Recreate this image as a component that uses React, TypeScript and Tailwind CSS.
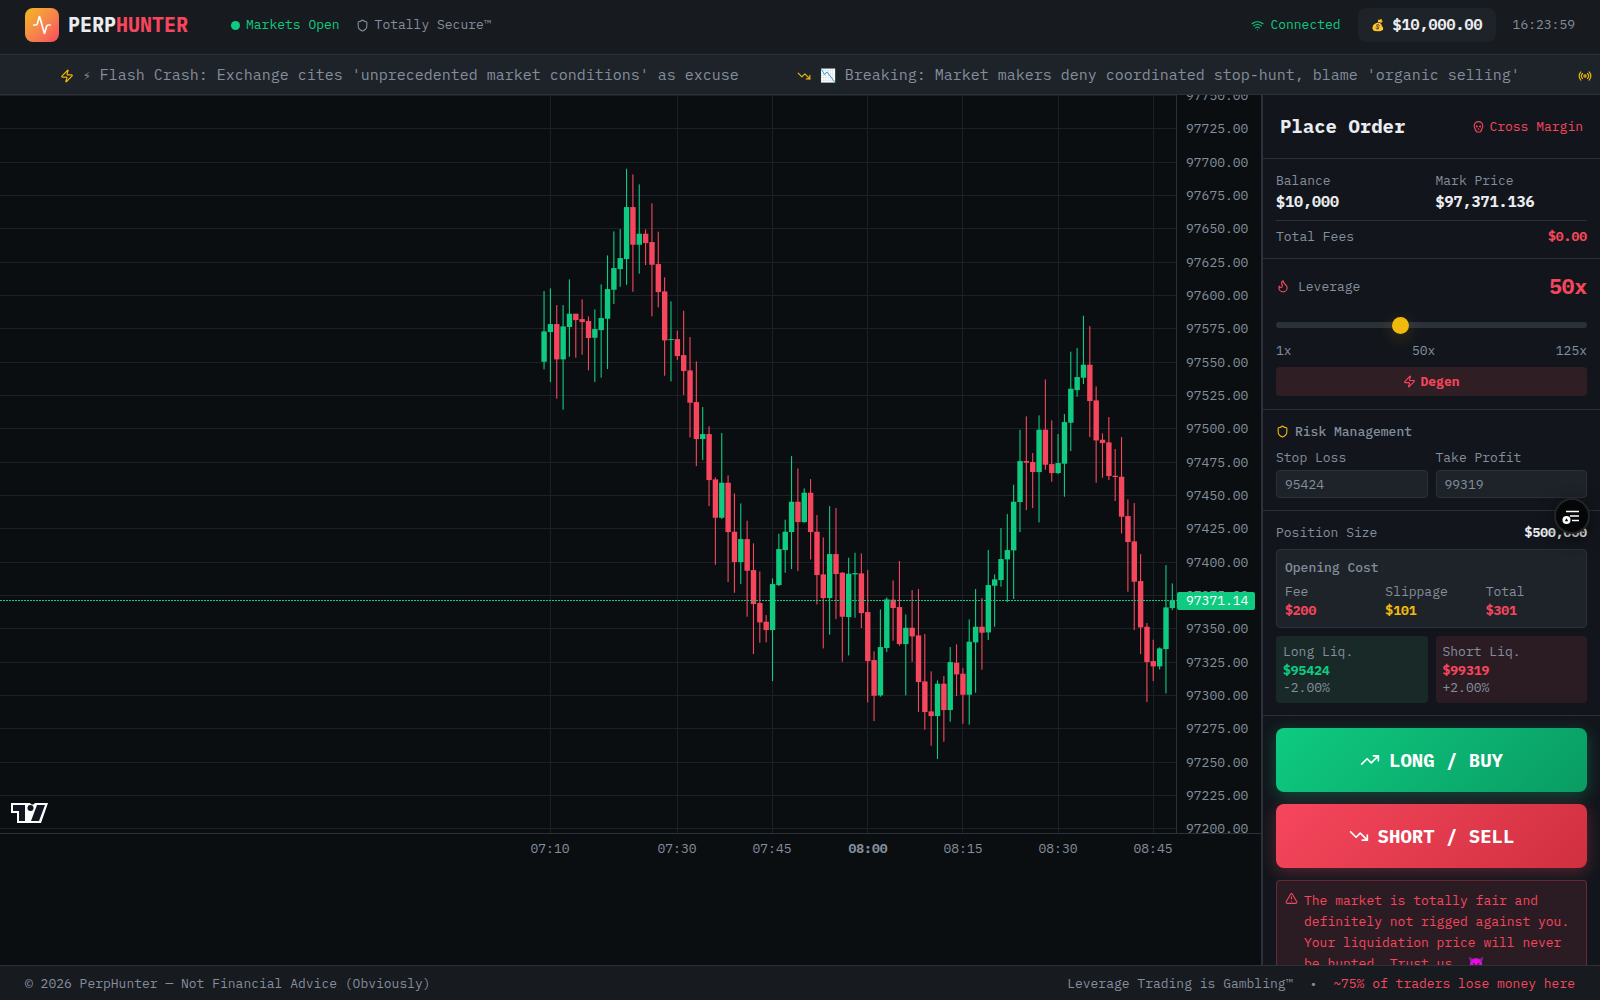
import React, { useState } from 'react';
import {
  Activity,
  Flame,
  Radio,
  Shield,
  Skull,
  TrendingDown,
  TrendingUp,
  TriangleAlert,
  Wifi,
  Zap,
} from 'lucide-react';

// [high, open, close, low] in $0.25 ticks below 97750
const CANDLES = [
  [587, 799, 708, 822], [579, 710, 686, 860], [629, 686, 792, 910], [629, 792, 693, 943],
  [552, 695, 655, 784], [655, 655, 674, 787], [612, 671, 680, 778], [663, 677, 728, 825],
  [642, 727, 701, 860], [567, 704, 668, 847], [480, 670, 581, 821], [408, 583, 518, 626],
  [401, 521, 488, 574], [220, 491, 335, 568], [237, 335, 448, 589], [267, 448, 415, 535],
  [402, 415, 443, 509], [324, 440, 508, 663], [409, 506, 590, 636], [546, 588, 735, 841],
  [618, 734, 731, 858], [706, 731, 782, 794], [646, 779, 827, 899], [725, 825, 922, 1026],
  [798, 920, 1031, 1112], [935, 1031, 1016, 1094], [993, 1016, 1154, 1232], [1146, 1152, 1267, 1408],
  [1013, 1267, 1162, 1271], [1140, 1162, 1310, 1460], [1194, 1309, 1400, 1492], [1224, 1400, 1331, 1466],
  [1276, 1331, 1426, 1564], [1344, 1424, 1526, 1676], [1428, 1523, 1581, 1642], [1559, 1579, 1604, 1641],
  [1449, 1604, 1466, 1757], [1315, 1469, 1361, 1472], [1273, 1364, 1309, 1432], [1082, 1310, 1219, 1421],
  [1119, 1219, 1280, 1427], [1179, 1280, 1192, 1282], [1151, 1192, 1310, 1392], [1259, 1309, 1439, 1527],
  [1326, 1437, 1508, 1659], [1232, 1508, 1376, 1618], [1238, 1376, 1436, 1571], [1430, 1432, 1564, 1699],
  [1387, 1565, 1435, 1680], [1372, 1437, 1433, 1567], [1374, 1434, 1553, 1598], [1424, 1550, 1697, 1821],
  [1668, 1694, 1801, 1877], [1542, 1800, 1655, 1804], [1506, 1658, 1512, 1670], [1455, 1513, 1538, 1636],
  [1397, 1535, 1646, 1651], [1557, 1646, 1597, 1800], [1484, 1597, 1623, 1699], [1481, 1620, 1760, 1850],
  [1616, 1758, 1850, 1903], [1728, 1848, 1862, 1951], [1755, 1862, 1765, 1991], [1742, 1765, 1844, 1939],
  [1655, 1844, 1700, 1879], [1647, 1702, 1737, 1802], [1718, 1735, 1798, 1885], [1572, 1798, 1639, 1888],
  [1481, 1641, 1594, 1792], [1508, 1594, 1612, 1723], [1364, 1611, 1469, 1634], [1437, 1471, 1452, 1594],
  [1298, 1454, 1391, 1474], [1256, 1392, 1364, 1520], [1168, 1365, 1219, 1511], [1003, 1220, 1097, 1310],
  [963, 1097, 1102, 1244], [1073, 1100, 1130, 1238], [960, 1130, 1003, 1281], [852, 1003, 1108, 1123],
  [975, 1106, 1133, 1159], [1016, 1133, 1103, 1136], [956, 1105, 980, 1204], [769, 982, 880, 1067],
  [758, 884, 845, 904], [661, 847, 808, 866], [692, 808, 917, 1025], [873, 915, 1035, 1162],
  [1014, 1033, 1043, 1147], [965, 1041, 1142, 1154], [1061, 1141, 1145, 1217], [1025, 1144, 1264, 1314],
  [1212, 1262, 1340, 1489], [1223, 1338, 1459, 1604], [1376, 1457, 1596, 1676], [1583, 1594, 1700, 1820],
  [1633, 1697, 1713, 1757], [1656, 1713, 1659, 1722], [1409, 1661, 1536, 1794], [1464, 1538, 1516, 1544],
];

const TIMES = [
  { label: '07:10', index: 1 },
  { label: '07:30', index: 21 },
  { label: '07:45', index: 36 },
  { label: '08:00', index: 51, major: true },
  { label: '08:15', index: 66 },
  { label: '08:30', index: 81 },
  { label: '08:45', index: 96 },
];

const PRICES = Array.from({ length: 23 }, (_, i) => 97750 - i * 25);
const LAST_PRICE = 97371.14;

const AXIS_X = 1177;
const AXIS_Y = 738;
const candleX = (i: number) => 544 + i * 6.346;
const tickY = (t: number) => t / 3 + 0.4;
const priceY = (p: number) => tickY((97750 - p) * 4);

const Chart: React.FC = () => {
  const lastY = Math.floor(priceY(LAST_PRICE));

  return (
    <svg
      viewBox="0 0 1261 780"
      preserveAspectRatio="xMaxYMin slice"
      className="block h-[780px] w-full shrink-0 text-[13px]"
      role="img"
      aria-label="BTC perpetual price chart"
    >
      {/* Grid */}
      <g stroke="#1c2027" strokeWidth="1">
        {PRICES.map((p) => {
          const y = Math.floor(priceY(p)) + 0.5;
          return <line key={p} x1="0" x2={AXIS_X} y1={y} y2={y} />;
        })}
        {TIMES.map((t) => {
          const x = Math.floor(candleX(t.index)) + 0.5;
          return <line key={t.label} x1={x} x2={x} y1="0" y2={AXIS_Y} />;
        })}
      </g>

      {/* Candles */}
      {CANDLES.map(([high, open, close, low], i) => {
        const x = candleX(i);
        const color = close < open ? '#0ecb81' : '#f6465d';
        const top = tickY(Math.min(open, close));
        const bottom = tickY(Math.max(open, close));
        return (
          <g key={i} fill={color}>
            <rect x={x - 0.5} y={tickY(high)} width="1.1" height={(low - high) / 3} />
            <rect x={x - 2.6} y={top} width="5.4" height={Math.max(bottom - top, 1)} />
          </g>
        );
      })}

      {/* Axes */}
      <g stroke="#2b3139">
        <line x1="0" x2="1261" y1={AXIS_Y + 0.5} y2={AXIS_Y + 0.5} />
        <line x1={AXIS_X - 0.5} x2={AXIS_X - 0.5} y1="0" y2={AXIS_Y} />
      </g>
      <g fill="#848e9c">
        {PRICES.map((p) => (
          <text key={p} x="1186" y={Math.floor(priceY(p)) + 5}>
            {p.toFixed(2)}
          </text>
        ))}
        {TIMES.map((t) => (
          <text
            key={t.label}
            x={Math.round(candleX(t.index))}
            y="758"
            textAnchor="middle"
            fontWeight={t.major ? 700 : 400}
          >
            {t.label}
          </text>
        ))}
      </g>

      {/* Last price */}
      <line x1="0" x2={AXIS_X} y1={lastY + 0.5} y2={lastY + 0.5} stroke="#0ecb81" strokeDasharray="2 1" />
      <rect x={AXIS_X} y={lastY - 8} width="78" height="18" rx="2" fill="#0ecb81" />
      <text x="1186" y={lastY + 5} fill="#ffffff">
        {LAST_PRICE.toFixed(2)}
      </text>

      {/* Chart library mark */}
      <g transform="translate(10 707)">
        <path d="M1 1h19c2 2 3 2 5 0h13l-7 20H7V11H1z" fill="#ffffff" />
        <path d="M3 3h12v16H9V9H3zM27 3h8l-6 16h-8z" fill="#131722" />
        <circle cx="20.5" cy="6" r="3" fill="#131722" />
      </g>
    </svg>
  );
};

const Header: React.FC = () => (
  <header className="flex shrink-0 items-center justify-between border-b border-[#2b3139] bg-[#171a1f] px-[25px] pt-2 pb-3">
    <div className="flex items-center gap-[43px]">
      <div className="flex items-center gap-[9px]">
        <div className="flex size-[34px] items-center justify-center rounded-lg bg-linear-to-br from-[#f0b90b] to-[#f6465d]">
          <Activity className="size-5 text-white" />
        </div>
        <h1 className="text-[20px] font-bold">
          PERP<span className="text-[#f6465d]">HUNTER</span>
        </h1>
      </div>
      <div className="flex items-center gap-4 text-[13px]">
        <span className="flex items-center gap-1.5 text-[#0ecb81]">
          <span className="size-[9px] rounded-full bg-[#0ecb81]" />
          Markets Open
        </span>
        <span className="flex items-center gap-1.5 text-[#848e9c]">
          <Shield className="size-[13px]" />
          Totally Secure™
        </span>
      </div>
    </div>

    <div className="flex items-center gap-[17px] text-[13px]">
      <span className="flex items-center gap-1.5 text-[#0ecb81]">
        <Wifi className="size-[13px]" />
        Connected
      </span>
      <span className="flex h-[34px] items-center gap-2 rounded-lg bg-[#1e2329] px-[13px]">
        <span className="text-[11px]">💰</span>
        <span className="text-[15px] font-bold">$10,000.00</span>
      </span>
      <time className="text-[#848e9c]">16:23:59</time>
    </div>
  </header>
);

const NEWS = [
  { icon: Zap, emoji: '⚡', text: "Flash Crash: Exchange cites 'unprecedented market conditions' as excuse" },
  { icon: TrendingDown, emoji: '📉', text: "Breaking: Market makers deny coordinated stop-hunt, blame 'organic selling'" },
  { icon: Radio, emoji: '📡', text: 'Exchange maintenance scheduled right before your take profit' },
];

const Ticker: React.FC = () => (
  <div className="flex h-10 shrink-0 items-center gap-[58px] overflow-hidden border-b border-[#2b3139] bg-[#1e2329] pt-0.5 pl-[60px] text-[15px] whitespace-nowrap text-[#848e9c]">
    {NEWS.map(({ icon: Icon, emoji, text }) => (
      <div key={text} className="flex shrink-0 items-center gap-[9px]">
        <Icon className="size-[14px] text-[#f0b90b]" />
        <span className="text-[13px]">{emoji}</span>
        <span>{text}</span>
      </div>
    ))}
  </div>
);

const section = 'border-b border-[#2b3139] px-[13px] pt-[13px]';

const OrderPanel: React.FC = () => {
  const [leverage, setLeverage] = useState(50);

  return (
    <aside className="w-[339px] shrink-0 overflow-hidden border-l-2 border-[#2b3139] bg-[#12161c] text-[13px] leading-[17px] text-[#848e9c]">
      <div className="flex h-16 items-center justify-between border-b border-[#2b3139] px-[17px]">
        <h2 className="text-[19px] font-bold text-[#eaecef]">Place Order</h2>
        <span className="flex items-center gap-1 text-[#f6465d]">
          <Skull className="size-[13px]" />
          Cross Margin
        </span>
      </div>

      {/* Account */}
      <div className={`${section} pb-[13px]`}>
        <div className="grid grid-cols-2 gap-2">
          <div>
            <div>Balance</div>
            <div className="mt-0.5 text-[15px] leading-[21px] font-bold text-[#eaecef]">$10,000</div>
          </div>
          <div>
            <div>Mark Price</div>
            <div className="mt-0.5 text-[15px] leading-[21px] font-bold text-[#eaecef]">$97,371.136</div>
          </div>
        </div>
        <div className="mt-2 flex justify-between border-t border-[#2b3139] pt-[7px]">
          <span>Total Fees</span>
          <span className="font-bold text-[#f6465d]">$0.00</span>
        </div>
      </div>

      {/* Leverage */}
      <div className={`${section} pb-[13px]`}>
        <div className="flex h-7 items-center justify-between">
          <label htmlFor="leverage" className="flex items-center gap-2">
            <Flame className="size-[14px] text-[#f6465d]" />
            Leverage
          </label>
          <span className="text-[21px] font-bold text-[#f6465d]">{leverage}x</span>
        </div>
        <input
          id="leverage"
          type="range"
          min={1}
          max={125}
          value={leverage}
          onChange={(e) => setLeverage(Number(e.target.value))}
          className="mt-[22px] block h-1.5 w-full appearance-none rounded-full bg-[#2b3139] [&::-webkit-slider-thumb]:size-[17px] [&::-webkit-slider-thumb]:appearance-none [&::-webkit-slider-thumb]:rounded-full [&::-webkit-slider-thumb]:bg-[#f0b90b] [&::-webkit-slider-thumb]:shadow-[0_4px_16px_rgba(240,185,11,0.2)]"
        />
        <div className="mt-3.5 flex justify-between">
          <span>1x</span>
          <span>50x</span>
          <span>125x</span>
        </div>
        <div className="mt-2 flex h-[29px] items-center justify-center gap-1 rounded bg-[#301e25] font-bold text-[#f6465d]">
          <Zap className="size-[13px]" />
          Degen
        </div>
      </div>

      {/* Risk management */}
      <div className={`${section} pb-3`}>
        <h3 className="flex items-center gap-1.5 font-medium">
          <Shield className="size-[13px] text-[#f0b90b]" />
          Risk Management
        </h3>
        <div className="mt-[9px] grid grid-cols-2 gap-2">
          <label>
            Stop Loss
            <input
              placeholder="95424"
              className="mt-1 block h-7 w-full rounded border border-[#2b3139] bg-[#1e2329] px-2 placeholder:text-[#848e9c]"
            />
          </label>
          <label>
            Take Profit
            <input
              placeholder="99319"
              className="mt-1 block h-7 w-full rounded border border-[#2b3139] bg-[#1e2329] px-2 placeholder:text-[#848e9c]"
            />
          </label>
        </div>
      </div>

      {/* Position */}
      <div className={`${section} pb-3`}>
        <div className="flex justify-between">
          <span>Position Size</span>
          <span className="font-bold text-[#eaecef]">$500,000</span>
        </div>
        <div className="mt-2 rounded border border-[#2b3139] bg-[#1e2329] px-2 pt-[9px] pb-2">
          <div className="font-medium">Opening Cost</div>
          <div className="mt-[7px] grid grid-cols-3 gap-2">
            <div>
              <div>Fee</div>
              <div className="mt-0.5 font-bold text-[#f6465d]">$200</div>
            </div>
            <div>
              <div>Slippage</div>
              <div className="mt-0.5 font-bold text-[#f0b90b]">$101</div>
            </div>
            <div>
              <div>Total</div>
              <div className="mt-0.5 font-bold text-[#f6465d]">$301</div>
            </div>
          </div>
        </div>
        <div className="mt-2 grid grid-cols-2 gap-2">
          <div className="rounded bg-[#192927] p-[7px]">
            <div>Long Liq.</div>
            <div className="mt-0.5 font-bold text-[#0ecb81]">$95424</div>
            <div>-2.00%</div>
          </div>
          <div className="rounded bg-[#2b1c23] p-[7px]">
            <div>Short Liq.</div>
            <div className="mt-0.5 font-bold text-[#f6465d]">$99319</div>
            <div>+2.00%</div>
          </div>
        </div>
      </div>

      {/* Actions */}
      <div className="flex flex-col gap-3 px-[13px] pt-3">
        <button
          type="button"
          className="flex h-16 items-center justify-center gap-[9px] rounded-lg bg-linear-135 from-[#0ecb81] to-[#0a9c63] text-[19px] font-bold text-white shadow-[0_4px_16px_rgba(14,203,129,0.3)]"
        >
          <TrendingUp className="size-5" />
          LONG / BUY
        </button>
        <button
          type="button"
          className="flex h-16 items-center justify-center gap-[9px] rounded-lg bg-linear-135 from-[#f6465d] to-[#d03040] text-[19px] font-bold text-white shadow-[0_4px_16px_rgba(246,70,93,0.3)]"
        >
          <TrendingDown className="size-5" />
          SHORT / SELL
        </button>
        <div className="flex gap-1.5 rounded border border-[#f6465d]/30 bg-[#2b1c23] px-2 py-[9px] leading-[21px] text-[#f6465d]">
          <TriangleAlert className="mt-0.5 size-[13px] shrink-0" />
          <p>
            The market is totally fair and definitely not rigged against you. Your liquidation price will never be
            hunted. Trust us. 😈
          </p>
        </div>
      </div>
    </aside>
  );
};

const Footer: React.FC = () => (
  <footer className="flex h-[35px] shrink-0 items-center justify-between border-t border-[#2b3139] bg-[#171a1f] px-[25px] pt-px text-[13px] text-[#848e9c]">
    <span>© 2026 PerpHunter — Not Financial Advice (Obviously)</span>
    <div className="flex items-center gap-4">
      <span>Leverage Trading is Gambling™</span>
      <span>•</span>
      <span className="text-[#f6465d]">~75% of traders lose money here</span>
    </div>
  </footer>
);

const App: React.FC = () => (
  <div className="flex h-screen flex-col overflow-hidden bg-[#0b0e11] font-['IBM_Plex_Mono','Liberation_Mono','DejaVu_Sans_Mono',monospace] text-[#eaecef]">
    <Header />
    <Ticker />
    <main className="flex min-h-0 flex-1">
      <section className="min-w-0 flex-1 overflow-hidden">
        <Chart />
      </section>
      <OrderPanel />
    </main>
    <Footer />

    <button
      type="button"
      aria-label="Open menu"
      className="fixed top-[498px] right-[10px] flex size-9 items-center justify-center rounded-full border-2 border-[#222426] bg-[#050607] shadow-[0_4px_16px_rgba(0,0,0,0.5)]"
    >
      <svg viewBox="0 0 20 18" className="h-[18px] w-5">
        <path d="M4 4.5h13M8 9h9M10 13.500h7" stroke="#ffffff" strokeWidth="1.500" fill="none" />
        <circle cx="4.500" cy="13" r="4" fill="#ffffff" />
        <path d="M4.500 11.200l1.700 3H2.800z" fill="#050607" />
      </svg>
    </button>
  </div>
);

export default App;
